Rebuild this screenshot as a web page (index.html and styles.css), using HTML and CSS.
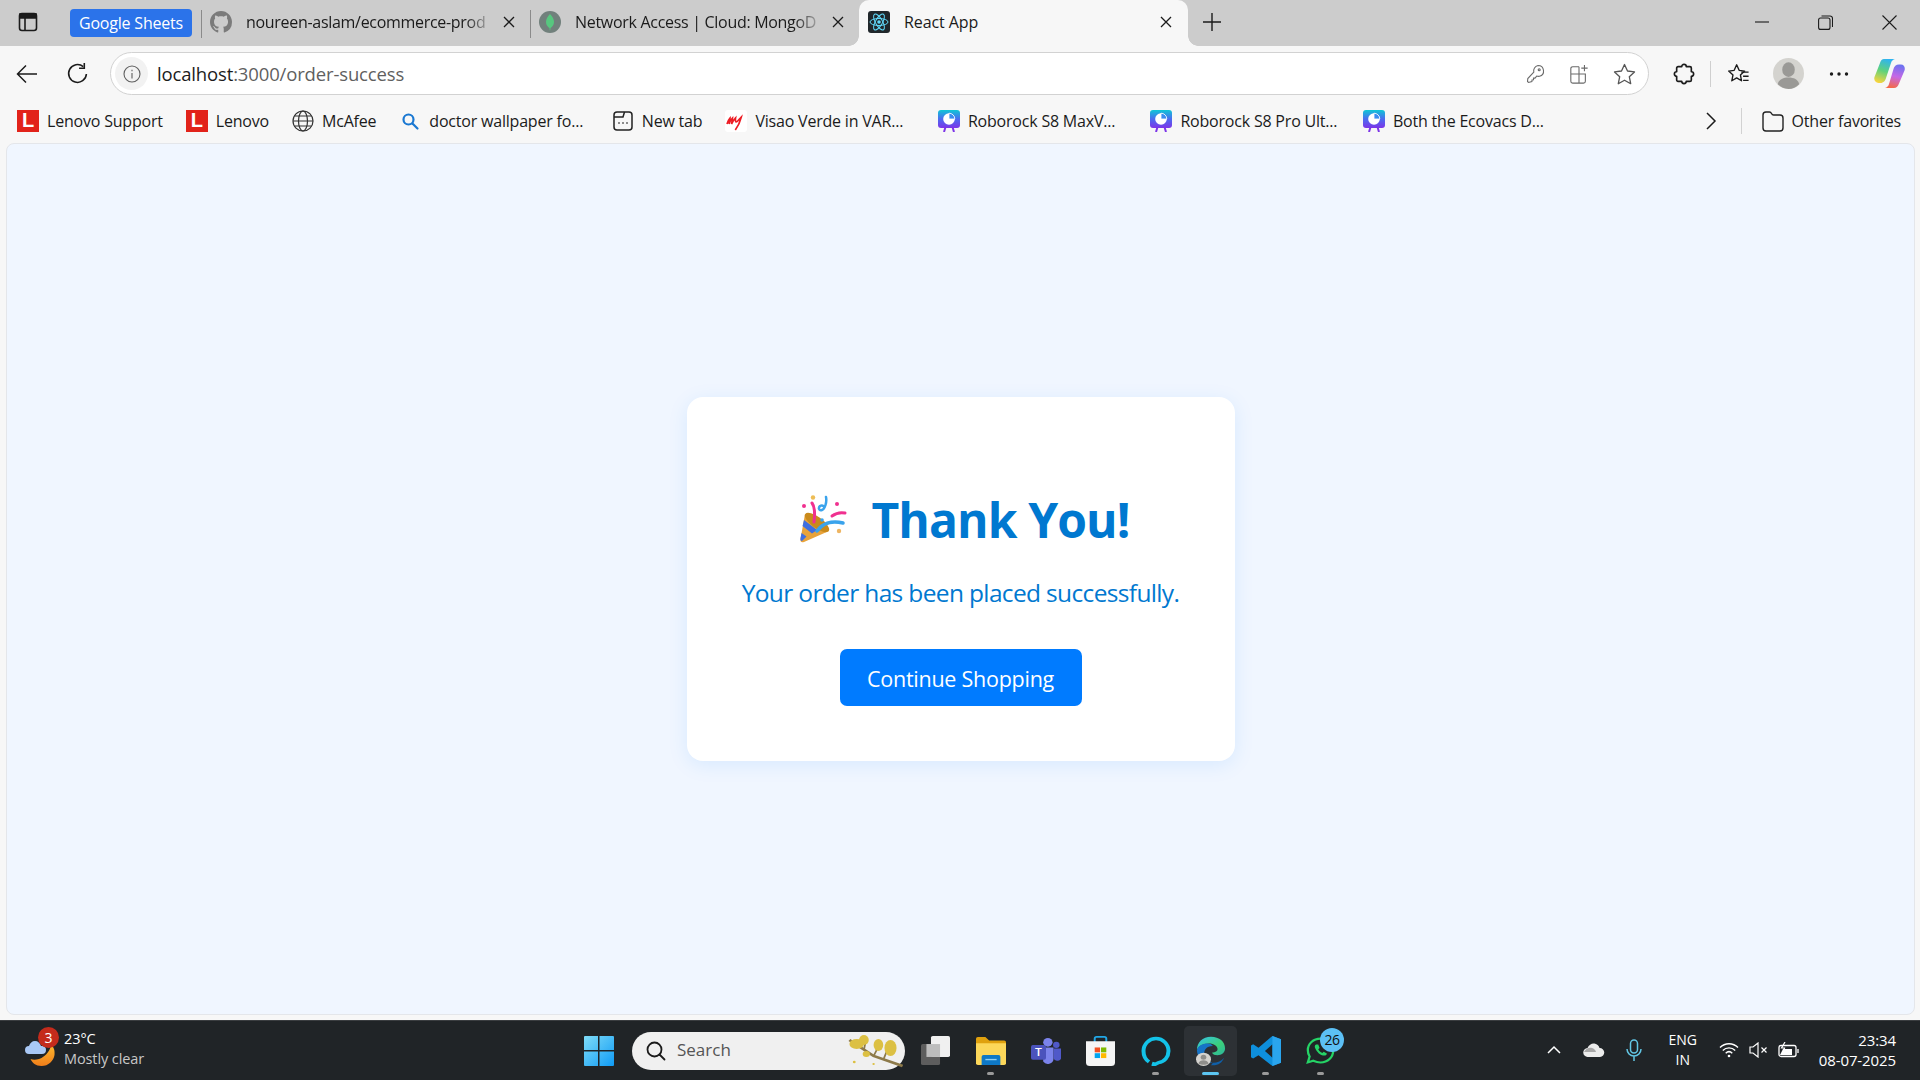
FILE: index.html
```html
<!DOCTYPE html>
<html lang="en">

<head>
    <meta charset="UTF-8">
    <meta name="viewport" content="width=device-width, initial-scale=1.0">
    <title>React App</title>
    <link rel="stylesheet" href="styles.css">
</head>

<body>

    <div class="tabstrip">
        <div class="sidebar-btn">
            <svg width="20" height="20" viewBox="0 0 20 20" fill="none" stroke="#1b1b1b" stroke-width="1.6"><rect x="1.5" y="1.5" width="17" height="17" rx="2.5"/><path d="M7 6v12"/><path d="M2 2h16v4H2z" fill="#1b1b1b"/></svg>
        </div>
        <div class="group-pill">Google Sheets</div>

        <div class="tab tab-sep">
            <svg class="tab-icon" width="22" height="22" viewBox="0 0 16 16"><path fill="#7b7b7b" d="M8 0C3.58 0 0 3.58 0 8c0 3.54 2.29 6.53 5.47 7.59.4.07.55-.17.55-.38 0-.19-.01-.82-.01-1.49-2.01.37-2.53-.49-2.69-.94-.09-.23-.48-.94-.82-1.13-.28-.15-.68-.52-.01-.53.63-.01 1.08.58 1.23.82.72 1.21 1.87.87 2.33.66.07-.52.28-.87.51-1.07-1.78-.2-3.64-.89-3.64-3.95 0-.87.31-1.59.82-2.15-.08-.2-.36-1.02.08-2.12 0 0 .67-.21 2.2.82.64-.18 1.32-.27 2-.27s1.36.09 2 .27c1.53-1.04 2.2-.82 2.2-.82.44 1.1.16 1.92.08 2.12.51.56.82 1.27.82 2.15 0 3.07-1.87 3.75-3.65 3.95.29.25.54.73.54 1.48 0 1.07-.01 1.93-.01 2.2 0 .21.15.46.55.38A8.01 8.01 0 0 0 16 8c0-4.42-3.58-8-8-8z"/></svg>
            <span class="tab-title">noureen-aslam/ecommerce-prod</span>
            <svg class="tab-close" width="12" height="12" viewBox="0 0 12 12" stroke="#1b1b1b" stroke-width="1.3"><path d="M1 1l10 10M11 1L1 11"/></svg>
        </div>

        <div class="tab tab-sep tab-before-active">
            <svg class="tab-icon" width="22" height="22" viewBox="0 0 22 22"><circle cx="11" cy="11" r="11" fill="#71807c"/><path fill="#57c77f" d="M11 3c2.600 2.800 4 5.400 4 8 0 2.800-1.600 4.700-3.500 6l-.2 2.300h-.6l-.2-2.300C8.600 15.700 7 13.800 7 11c0-2.600 1.400-5.200 4-8z"/></svg>
            <span class="tab-title">Network Access | Cloud: MongoD</span>
            <svg class="tab-close" width="12" height="12" viewBox="0 0 12 12" stroke="#1b1b1b" stroke-width="1.3"><path d="M1 1l10 10M11 1L1 11"/></svg>
        </div>

        <div class="tab tab-active">
            <svg class="tab-icon" width="22" height="22" viewBox="0 0 22 22"><rect width="22" height="22" rx="3" fill="#20272b"/><g fill="none" stroke="#61dafb" stroke-width="1"><ellipse cx="11" cy="11" rx="9" ry="3.500"/><ellipse cx="11" cy="11" rx="9" ry="3.500" transform="rotate(60 11 11)"/><ellipse cx="11" cy="11" rx="9" ry="3.500" transform="rotate(120 11 11)"/></g><circle cx="11" cy="11" r="1.800" fill="#61dafb"/></svg>
            <span class="tab-title">React App</span>
            <svg class="tab-close" width="12" height="12" viewBox="0 0 12 12" stroke="#1b1b1b" stroke-width="1.3"><path d="M1 1l10 10M11 1L1 11"/></svg>
        </div>

        <div class="new-tab">
            <svg width="20" height="20" viewBox="0 0 20 20" stroke="#1b1b1b" stroke-width="1.4"><path d="M10 1v18M1 10h18"/></svg>
        </div>

        <div class="window-controls">
            <svg width="14" height="14" viewBox="0 0 14 14" stroke="#1b1b1b" stroke-width="1.1"><path d="M0 7h14"/></svg>
            <svg width="15" height="15" viewBox="0 0 15 15" fill="none" stroke="#1b1b1b" stroke-width="1.100"><rect x=".6" y="3" width="11.400" height="11.400" rx="2"/><path d="M3.500 1h8.500a2.500 2.500 0 0 1 2.500 2.500v8.500"/></svg>
            <svg width="15" height="15" viewBox="0 0 15 15" stroke="#1b1b1b" stroke-width="1.100"><path d="M.5.5l14 14M14.500.5l-14 14"/></svg>
        </div>
    </div>

    <div class="toolbar">
        <div class="nav-btn">
            <svg width="22" height="20" viewBox="0 0 22 20" fill="none" stroke="#1b1b1b" stroke-width="1.500"><path d="M21 10H2M10 1.500L1.500 10l8.500 8.500"/></svg>
        </div>
        <div class="nav-btn nav-reload">
            <svg width="23" height="23" viewBox="0 0 22 22" fill="none" stroke="#1b1b1b" stroke-width="1.500"><path d="M19.500 11.500a8.500 8.500 0 1 1-3-7"/><path d="M17.500 1v5h-5"/></svg>
        </div>
        <div class="address-bar">
            <span class="info-chip">
                <svg width="18" height="18" viewBox="0 0 18 18" fill="none" stroke="#5f5f5f" stroke-width="1.100"><circle cx="9" cy="9" r="8"/><path d="M9 8v5.500M9 4.800v1.400"/></svg>
            </span>
            <span class="url"><span class="url-host">localhost</span>:3000/order-success</span>
            <div class="address-actions">
                <svg width="20" height="20" viewBox="0 0 20 20" fill="none" stroke="#6a6a6a" stroke-width="1.100"><path d="M13 1.500a5.500 5.500 0 0 1 1.500 10.800c-1 .2-2 .1-2.800-.2l-1.700 2h-1.500v1.700l-1.500.1-.1 1.600-3.400 1-1-1 .3-3 6-6.300A5.500 5.500 0 0 1 13 1.500z"/><circle cx="14.200" cy="5.800" r="1"/></svg>
                <svg width="20" height="20" viewBox="0 0 20 22" fill="none" stroke="#6a6a6a" stroke-width="1.200"><path d="M10 3H3a2 2 0 0 0-2 2v14a2 2 0 0 0 2 2h12a2 2 0 0 0 2-2V11H1M10 3v18"/><path d="M16 1v7M12.500 4.500h7"/></svg>
                <svg width="23" height="22" viewBox="0 0 23 22" fill="none" stroke="#555" stroke-width="1.300"><path d="M11.500 1.500l3 6.500 7 .9-5.200 4.800 1.400 7-6.200-3.500-6.200 3.500 1.400-7L1.500 8.900l7-.9z" stroke-linejoin="round"/></svg>
            </div>
        </div>
        <div class="toolbar-icons">
            <svg class="ext-icon" width="22" height="22" viewBox="0 0 24 24" fill="none" stroke="#1b1b1b" stroke-width="1.800"><path d="M9.500 4a2.500 2.500 0 0 1 5 0h4a1.500 1.500 0 0 1 1.500 1.500v4a2.500 2.500 0 0 1 0 5v4a1.500 1.500 0 0 1-1.500 1.500h-4a2.500 2.500 0 0 1-5 0h-4A1.500 1.500 0 0 1 4 18.500v-4a2.500 2.500 0 0 1 0-5v-4A1.500 1.500 0 0 1 5.500 4z" stroke-linejoin="round"/></svg>
            <span class="toolbar-sep"></span>
            <svg class="fav-icon" width="23" height="22" viewBox="0 0 24 24" fill="none" stroke="#1b1b1b" stroke-width="1.500"><path d="M10 2l2.700 6 6 .8-4.600 4.200 1.200 6.400L10 16.200 4.700 19.400 6 13 1.300 8.800l6-.8z" stroke-linejoin="round"/><path d="M15 10h8M17 14.500h6M17 19h6"/></svg>
            <svg class="avatar" width="31" height="31" viewBox="0 0 32 32"><circle cx="16" cy="16" r="16" fill="#d4d3cf"/><ellipse cx="16" cy="12" rx="6.500" ry="7.500" fill="#9a9996"/><path d="M5 27c1-5 5.500-7 11-7s10 2 11 7c-3 3-7 5-11 5s-8-2-11-5z" fill="#9a9996"/></svg>
            <svg class="dots-icon" width="20" height="4" viewBox="0 0 20 4" fill="#1b1b1b"><circle cx="2.500" cy="2" r="1.700"/><circle cx="10" cy="2" r="1.700"/><circle cx="17.500" cy="2" r="1.700"/></svg>
            <svg class="copilot" width="31" height="29" viewBox="0 0 31 29">
                <defs>
                    <linearGradient id="copA" x1="0.600" y1="0" x2="0.300" y2="1"><stop offset="0" stop-color="#2fb4f0"/><stop offset=".5" stop-color="#5fd27c"/><stop offset="1" stop-color="#f7d43e"/></linearGradient>
                    <linearGradient id="copB" x1="0.600" y1="0" x2="0.400" y2="1"><stop offset="0" stop-color="#6d72f0"/><stop offset=".5" stop-color="#c568e6"/><stop offset="1" stop-color="#f4694a"/></linearGradient>
                </defs>
                <path fill="url(#copB)" d="M20 29h-9c2-.5 3.500-2 4-4l4.500-15c.6-2.500 2.500-4.500 5.500-4.500h2c3 0 4.500 3 3.500 6L25 24.500c-.8 2.500-2.500 4.500-5 4.500z"/>
                <path fill="url(#copA)" d="M10 0h11c-2 .5-3.500 2-4 4l-5 15c-.6 2.500-2.500 5-5.500 5H4.500C1.500 24-.5 21 .5 18L6 4c.8-2.500 2-4 4-4z"/>
            </svg>
        </div>
    </div>

    <div class="bookmarks">
        <div class="bookmark"><span class="lenovo-icon">L</span><span>Lenovo Support</span></div>
        <div class="bookmark"><span class="lenovo-icon">L</span><span>Lenovo</span></div>
        <div class="bookmark">
            <svg width="22" height="22" viewBox="0 0 22 22" fill="none" stroke="#333" stroke-width="1.200"><circle cx="11" cy="11" r="10"/><ellipse cx="11" cy="11" rx="4.500" ry="10"/><path d="M1 11h20M2.500 6h17M2.500 16h17"/></svg>
            <span>McAfee</span>
        </div>
        <div class="bookmark bookmark-long">
            <svg width="22" height="22" viewBox="0 0 22 22" fill="none" stroke="#1a78d2" stroke-width="2.200"><circle cx="9.500" cy="9.500" r="5"/><path d="M13.500 13.500l5 5" stroke-linecap="round"/></svg>
            <span>doctor wallpaper fo...</span>
        </div>
        <div class="bookmark">
            <svg width="22" height="22" viewBox="0 0 22 22" fill="none" stroke="#222" stroke-width="1.500"><rect x="2" y="2" width="18" height="18" rx="3"/><path d="M2 7h9l1.500-5"/><path d="M6.500 13h1M10.500 13h1M14.500 13h1" stroke-width="2"/></svg>
            <span>New tab</span>
        </div>
        <div class="bookmark bookmark-long">
            <svg width="22" height="22" viewBox="0 0 22 22" fill="none"><rect width="22" height="22" rx="3" fill="#fff"/><path d="M2 14c1-3 2-5 3-6 0 2-.5 4-1 6 1-3 2.500-5 3.500-6 0 2-.5 4-1 6 1-2 3-5 4-6-.3 2 0 4 .8 4 1.200 0 3-3 5-5-1 4-3 9-6 13" stroke="#ed1c24" stroke-width="1.700"/></svg>
            <span>Visao Verde in VAR...</span>
        </div>
        <div class="bookmark bookmark-long">
            <svg width="22" height="22" viewBox="0 0 22 22"><use href="#rr"/></svg>
            <span>Roborock S8 MaxV...</span>
        </div>
        <div class="bookmark bookmark-long">
            <svg width="22" height="22" viewBox="0 0 22 22"><use href="#rr"/></svg>
            <span>Roborock S8 Pro Ult...</span>
        </div>
        <div class="bookmark bookmark-long">
            <svg width="22" height="22" viewBox="0 0 22 22"><use href="#rr"/></svg>
            <span>Both the Ecovacs D...</span>
        </div>
        <div class="bookmarks-end">
            <svg class="chevron" width="12" height="18" viewBox="0 0 12 18" fill="none" stroke="#1b1b1b" stroke-width="1.500"><path d="M2 1l8 8-8 8"/></svg>
            <span class="bookmarks-sep"></span>
            <div class="bookmark">
                <svg width="22" height="22" viewBox="0 0 22 22" fill="none" stroke="#222" stroke-width="1.400"><path d="M1 5a3 3 0 0 1 3-3h3.500c1 0 1.500.5 2 1.500.5 1 1 1.500 2 1.500H18a3 3 0 0 1 3 3v10a3 3 0 0 1-3 3H4a3 3 0 0 1-3-3z"/></svg>
                <span>Other favorites</span>
            </div>
        </div>
    </div>

    <svg class="defs-holder" width="0" height="0">
        <defs>
            <linearGradient id="rrGrad" x1="0" y1="0" x2="0" y2="1"><stop offset="0" stop-color="#0fc7d6"/><stop offset=".5" stop-color="#4b6cf0"/><stop offset="1" stop-color="#7d35e8"/></linearGradient>
            <g id="rr">
                <rect width="22" height="18" rx="3" fill="url(#rrGrad)"/>
                <circle cx="11" cy="9" r="5.800" fill="#fff"/>
                <path d="M11 9V3.200A5.800 5.800 0 0 1 16.800 9z" fill="#3b8df0" stroke="#fff" stroke-width=".8"/>
                <path d="M7.500 17l-1.500 5M14.500 17l1.500 5" stroke="#7d35e8" stroke-width="2"/>
            </g>
        </defs>
    </svg>

    <main class="page">
        <div class="success-card">
            <h1>
                <svg class="party-icon" width="50" height="50" viewBox="0 0 50 50">
                    <path d="M6 19l24 17L5 47c-3 1-4-1-3.500-3z" fill="#e8a33a"/>
                    <path d="M5 25l13 10-5 3.500L3.500 31zM2.500 38l5 3.500L3 46c-1 0-2-1-1.500-3z" fill="#3f6fe0"/>
                    <ellipse cx="18" cy="27.500" rx="14.500" ry="5.500" transform="rotate(36 18 27.500)" fill="#c98a1c"/>
                    <path d="M13 8c3 4 3 11 2 19" fill="none" stroke="#f0308f" stroke-width="3" stroke-linecap="round"/>
                    <path d="M27 2c1 5-1 12-4 13-3 1-4-2-2-4 2-1 4 0 4 1" fill="none" stroke="#3aa3ec" stroke-width="2.500" stroke-linecap="round"/>
                    <path d="M33 21c4-3 8-4 13-3" fill="none" stroke="#f0308f" stroke-width="3" stroke-linecap="round"/>
                    <path d="M18 36c5-7 14-11 26-8" fill="none" stroke="#3aa3ec" stroke-width="3.500" stroke-linecap="round"/>
                    <circle cx="14" cy="2.500" r="2.200" fill="#eebd55"/>
                    <circle cx="5" cy="11" r="2" fill="#f0308f"/>
                    <circle cx="38" cy="9" r="2" fill="#f0308f"/>
                    <circle cx="40" cy="36" r="2.200" fill="#eeb562"/>
                    <circle cx="23" cy="25" r="1.800" fill="#3aa3ec"/>
                </svg>
                <span>Thank You!</span>
            </h1>
            <p>Your order has been placed successfully.</p>
            <a class="continue-btn" href="#">Continue Shopping</a>
        </div>
    </main>

    <div class="taskbar">
        <div class="weather">
            <svg class="weather-icon" width="34" height="40" viewBox="0 0 34 40">
                <defs><linearGradient id="moon" x1="0" y1="0" x2="0" y2="1"><stop offset="0" stop-color="#fdb92e"/><stop offset="1" stop-color="#ef7d1a"/></linearGradient></defs>
                <path d="M27 14c3 2 4 6 3.500 10-1 6-6 11-13 11-6 0-9-3-11-7 3 1 7 1 11-1 5-3 9-8 9.500-13z" fill="url(#moon)"/>
                <path d="M5 23a4 4 0 0 1 0-8c1-3 3-5 6-5s5 2 6 5h1a4 4 0 0 1 0 8z" fill="#a9c8f5"/>
            </svg>
            <span class="weather-badge">3</span>
            <div class="weather-text">
                <div class="weather-temp">23°C</div>
                <div class="weather-desc">Mostly clear</div>
            </div>
        </div>

        <div class="task-center">
            <svg class="start-icon" width="30" height="30" viewBox="0 0 30 30">
                <defs><linearGradient id="win" x1="0" y1="0" x2="1" y2="1"><stop offset="0" stop-color="#7fdcf8"/><stop offset="1" stop-color="#0f9bf5"/></linearGradient></defs>
                <path fill="url(#win)" d="M1 0h13v14H0V1a1 1 0 0 1 1-1zM15.500 0H29a1 1 0 0 1 1 1v13H15.500zM0 15.500h14V30H1a1 1 0 0 1-1-1zM15.500 15.500H30V29a1 1 0 0 1-1 1H15.500z"/>
            </svg>
            <div class="search-box">
                <svg width="20" height="20" viewBox="0 0 20 20" fill="none" stroke="#1b1b1b" stroke-width="1.800"><circle cx="8.500" cy="8.500" r="7"/><path d="M13.500 13.500l5 5" stroke-linecap="round"/></svg>
                <span class="search-label">Search</span>
                <svg class="search-art" width="58" height="34" viewBox="0 0 48 34" preserveAspectRatio="none">
                    <path d="M2 6l20 16 24 10" fill="none" stroke="#8d7a4a" stroke-width="2.500"/>
                    <path d="M22 22l6-14M14 16l2-12M30 26l6-18" fill="none" stroke="#8d7a4a" stroke-width="1.500"/>
                    <g fill="#dcc043"><ellipse cx="8" cy="10" rx="6" ry="5"/><ellipse cx="14" cy="6" rx="4" ry="5"/><ellipse cx="26" cy="11" rx="4" ry="6"/><ellipse cx="36" cy="14" rx="5" ry="8"/><ellipse cx="16" cy="20" rx="3" ry="3"/><circle cx="6" cy="28" r="1.200"/><circle cx="22" cy="30" r="1"/></g>
                </svg>
            </div>

            <div class="task-item">
                <svg width="29" height="29" viewBox="0 0 32 36" preserveAspectRatio="none"><rect x="0" y="10" width="21" height="26" rx="2" fill="#5d5d5d"/><rect x="11" y="0" width="21" height="26" rx="2" fill="#f0f0f0"/><rect x="6" y="10" width="15" height="16" fill="#bdbdbd"/></svg>
            </div>
            <div class="task-item">
                <svg width="30" height="29" viewBox="0 0 32 32" preserveAspectRatio="none"><path d="M0 3a2 2 0 0 1 2-2h8l4 4h16a2 2 0 0 1 2 2v6H0z" fill="#e0a10e"/><path d="M0 8h32v22a2 2 0 0 1-2 2H2a2 2 0 0 1-2-2z" fill="#fcd75a"/><path d="M6 23a2 2 0 0 1 2-2h16a2 2 0 0 1 2 2v9H6z" fill="#0e78c6"/><path d="M10 26h12" stroke="#8fd0f5" stroke-width="1.500"/></svg>
                <span class="task-dot"></span>
            </div>
            <div class="task-item">
                <svg width="30" height="28" viewBox="0 0 32 32" preserveAspectRatio="none"><circle cx="18" cy="6" r="5" fill="#7b83eb"/><circle cx="27" cy="9" r="3.500" fill="#5059c9"/><path d="M13 12h11v13a6 6 0 0 1-11 3z" fill="#7b83eb"/><path d="M24 13h8v9a4 4 0 0 1-8 2z" fill="#5059c9"/><rect x="0" y="9" width="16" height="17" rx="2" fill="#4b53bc"/><text x="8" y="22" class="teams-t">T</text></svg>
            </div>
            <div class="task-item">
                <svg width="29" height="30" viewBox="0 0 30 34" preserveAspectRatio="none"><path d="M9 7V3a2 2 0 0 1 2-2h8a2 2 0 0 1 2 2v4" fill="none" stroke="#21a7e6" stroke-width="2"/><path d="M0 6h30v24a4 4 0 0 1-4 4H4a4 4 0 0 1-4-4z" fill="#f5f5f5"/><rect x="9" y="13" width="5.500" height="5.500" fill="#f25022"/><rect x="15.500" y="13" width="5.500" height="5.500" fill="#7fba00"/><rect x="9" y="19.500" width="5.500" height="5.500" fill="#00a4ef"/><rect x="15.500" y="19.500" width="5.500" height="5.500" fill="#ffb900"/></svg>
            </div>
            <div class="task-item">
                <svg width="30" height="30" viewBox="0 0 30 36" preserveAspectRatio="none" fill="none"><path d="M8 31C4 28 2.500 23 2.500 18 2.500 10 8 3 15 3s12.500 7 12.500 15c0 7-4 13-10 14l-5 3 1-3.500" stroke="#13c2e8" stroke-width="4" stroke-linejoin="round"/></svg>
                <span class="task-dot"></span>
            </div>
            <div class="task-item task-active">
                <svg width="30" height="30" viewBox="0 0 32 36" preserveAspectRatio="none">
                    <defs><linearGradient id="edgeG" x1="0" y1="0" x2="1" y2="1"><stop offset="0" stop-color="#36c1e8"/><stop offset=".6" stop-color="#3bd07a"/><stop offset="1" stop-color="#2db5a0"/></linearGradient></defs>
                    <path d="M16 1c9 0 15 6 15 14 0 5-4 8-8 8-3 0-5-1-6-3 4 0 6-2 6-4 0-4-4-7-9-7C7 9 2 13 1 17 1 8 7 1 16 1z" fill="url(#edgeG)"/>
                    <path d="M1 17c1-5 6-8 11-8 3 0 5 1 6 3-7 0-10 5-9 11 1 4 4 8 9 9-9 1-17-6-17-15z" fill="#1673c7"/>
                    <path d="M18 32c5 0 9-2 12-6-2 6-7 10-14 9z" fill="#0f5fa8"/>
                    <circle cx="8" cy="28" r="8" fill="#d5d3cf"/><circle cx="8" cy="25.500" r="3" fill="#8f8e8b"/><path d="M2.500 33c1-3 3-4 5.500-4s4.500 1 5.500 4c-3 2-8 2-11 0z" fill="#8f8e8b"/>
                </svg>
                <span class="task-dot active-dot"></span>
            </div>
            <div class="task-item">
                <svg width="30" height="30" viewBox="0 0 28 36" preserveAspectRatio="none"><path d="M20 0l8 4v28l-8 4-13-13-5 4-2-1.500V11.500L2 10l5 4zM20 10l-7 8 7 8z" fill="#0e8fdc" fill-rule="evenodd"/><path d="M20 0l8 4v28l-8 4z" fill="#2aa5ee"/></svg>
                <span class="task-dot"></span>
            </div>
            <div class="task-item">
                <svg width="29" height="29" viewBox="0 0 32 34" preserveAspectRatio="none" fill="none"><path d="M4 24C2.500 21.500 2 19 2 16.500 2 9 8 3 16 3s14 6 14 14-6 14-14 14c-3 0-5.500-.8-8-2l-6 2z" stroke="#25d366" stroke-width="2.500"/><path d="M11 10c-1.500 1-2 3 0 6 2 4 6 7 9 7 2 0 3-1 3-2.500l-3.500-2-1.500 1.500c-2-1-3.500-2.500-4.500-4.500l1.500-1.500-1.500-4z" fill="#25d366"/></svg>
                <span class="task-badge">26</span>
                <span class="task-dot"></span>
            </div>
        </div>

        <div class="tray">
            <span class="tray-slot"><svg width="14" height="9" viewBox="0 0 14 9" fill="none" stroke="#fff" stroke-width="1.500"><path d="M1 8l6-6 6 6"/></svg></span>
            <span class="tray-slot"><svg width="22" height="14" viewBox="0 0 22 14"><path d="M5 14a4.500 4.500 0 0 1-.5-9C6 1.500 9 0 11.500 .5c3 .5 4.500 2.500 5 4.500a4.500 4.500 0 0 1 .5 9z" fill="#ececec"/><path d="M1 9C3 5 6.500 4 9 5c2 .5 3.500 2 4 4z" fill="#a8a8a8"/></svg></span>
            <span class="tray-slot"><svg width="16" height="22" viewBox="0 0 16 22" fill="none" stroke="#62c6e4" stroke-width="1.500"><rect x="4.500" y="1" width="7" height="13" rx="3.500"/><path d="M1 10a7 7 0 0 0 14 0M8 17v5"/></svg></span>
            <div class="lang"><div>ENG</div><div>IN</div></div>
            <span class="tray-icon"><svg width="20" height="16" viewBox="0 0 20 16" fill="none" stroke="#fff" stroke-width="1.400"><path d="M1 5.500c5-5 13-5 18 0M3.800 8.500c3.500-3.500 8.900-3.500 12.400 0M6.700 11.200c2-2 4.600-2 6.600 0"/><circle cx="10" cy="14" r="1.300" fill="#fff" stroke="none"/></svg></span>
            <span class="tray-icon"><svg width="20" height="16" viewBox="0 0 20 16" fill="none" stroke="#fff" stroke-width="1.200"><path d="M1 5v6h3l5 4V1L4 5z"/><path d="M12.500 5.500l5 5M17.500 5.500l-5 5"/></svg></span>
            <span class="tray-icon"><svg width="21" height="16" viewBox="0 0 21 16" fill="none" stroke="#fff" stroke-width="1.300"><rect x="1" y="3.500" width="17" height="11" rx="2"/><path d="M20 7v4"/><path d="M2 13L5 7l9-.1V13z" fill="#fff" stroke="none"/><path d="M7 0L3.500 6h3L5 11" stroke-width="1.200"/></svg></span>
            <div class="clock"><div>23:34</div><div>08-07-2025</div></div>
        </div>
    </div>

</body>

</html>
```

FILE: styles.css
```css
* {
    box-sizing: border-box;
}

html,
body {
    height: 100%;
}

body {
    margin: 0;
    display: flex;
    flex-direction: column;
    background-color: #f7f7f7;
    font-family: "Open Sans", sans-serif;
    color: #1b1b1b;
    overflow: hidden;
}

svg {
    flex-shrink: 0;
    display: block;
}

.defs-holder {
    position: absolute;
}

/* tabs */

.tabstrip {
    height: 46px;
    display: flex;
    align-items: center;
    background-color: #cccccc;
}

.sidebar-btn {
    width: 70px;
    height: 100%;
    padding-left: 18px;
    padding-bottom: 2px;
    display: flex;
    align-items: center;
}

.group-pill {
    width: 122px;
    height: 28px;
    margin-right: 9px;
    display: flex;
    align-items: center;
    justify-content: center;
    background-color: #2b73ea;
    border-radius: 4px;
    color: #fff;
    font-size: 16px;
    letter-spacing: -0.2px;
}

.tab {
    width: 329px;
    height: 46px;
    padding: 0 15px 2px 8px;
    display: flex;
    align-items: center;
    font-size: 16px;
    letter-spacing: -0.3px;
    position: relative;
}

.tab-sep {
    padding-left: 9px;
}

.tab-sep::before {
    content: "";
    position: absolute;
    left: 0;
    top: 10px;
    width: 1px;
    height: 28px;
    background-color: #8a8a8a;
}

.tab-icon {
    margin-right: 14px;
}

.tab-title {
    flex: 1;
    min-width: 0;
    white-space: nowrap;
    -webkit-mask-image: linear-gradient(to right, #000 88%, transparent 100%);
    mask-image: linear-gradient(to right, #000 88%, transparent 100%);
}

.tab-close {
    margin-left: 8px;
}

.tab-active {
    background-color: #f7f7f7;
    border-radius: 10px 10px 0 0;
    padding-left: 9px;
    padding-right: 16px;
    letter-spacing: -0.1px;
}

.tab-active .tab-title {
    -webkit-mask-image: none;
    mask-image: none;
}

.tab-active::before,
.tab-active::after {
    content: "";
    position: absolute;
    bottom: 0;
    width: 10px;
    height: 10px;
}

.tab-active::before {
    left: -10px;
    background: radial-gradient(circle at 0 0, transparent 9.5px, #f7f7f7 10px);
}

.tab-active::after {
    right: -10px;
    background: radial-gradient(circle at 100% 0, transparent 9.500px, #f7f7f7 10px);
}

.new-tab {
    width: 48px;
    padding-left: 14px;
    margin-bottom: 2px;
}

.window-controls {
    margin-left: auto;
    margin-bottom: 2px;
    padding-right: 23px;
    display: flex;
    align-items: center;
    gap: 49px;
}

/* address bar row */

.toolbar {
    height: 49px;
    padding-top: 6px;
    display: flex;
    align-items: flex-start;
}

.nav-btn {
    width: 50px;
    height: 43px;
    display: flex;
    align-items: center;
    justify-content: center;
    margin-left: 2px;
    margin-right: -3px;
}

.nav-reload {
    margin-left: 3px;
    margin-right: -4px;
}

.address-bar {
    width: 1539px;
    height: 43px;
    margin-left: 12px;
    padding: 0 12px 0 4px;
    display: flex;
    align-items: center;
    background-color: #fff;
    border: 1px solid #d2d2d2;
    border-radius: 22px;
}

.info-chip {
    width: 33px;
    height: 33px;
    margin-right: 9px;
    display: flex;
    align-items: center;
    justify-content: center;
    background-color: #f2f2f2;
    border-radius: 50%;
}

.url {
    font-size: 18.5px;
    letter-spacing: -0.15px;
    color: #5f5f5f;
}

.url-host {
    color: #1b1b1b;
}

.address-actions {
    margin-left: auto;
    display: flex;
    align-items: center;
    gap: 24px;
}

.toolbar-icons {
    height: 43px;
    padding-left: 24px;
    display: flex;
    align-items: center;
}

.toolbar-sep {
    width: 1px;
    height: 26px;
    margin: 0 16px 0 15px;
    background-color: #cfcfcf;
}

.avatar {
    margin-left: 23px;
}

.dots-icon {
    margin-left: 25px;
}

.copilot {
    margin-left: 25px;
}

/* favorites bar */

.bookmarks {
    height: 48px;
    padding: 3px 19px 0 17px;
    display: flex;
    align-items: center;
    gap: 23px;
    font-size: 16px;
    letter-spacing: -0.2px;
    white-space: nowrap;
}

.bookmark {
    display: flex;
    align-items: center;
    gap: 8px;
}

.bookmark-long {
    width: 189.5px;
}

.lenovo-icon {
    width: 22px;
    height: 22px;
    display: flex;
    align-items: center;
    justify-content: center;
    background-color: #e2231a;
    color: #fff;
    font-family: "Liberation Sans", sans-serif;
    font-size: 20px;
    font-weight: 700;
    letter-spacing: 0;
}

.bookmarks-end {
    margin-left: auto;
    display: flex;
    align-items: center;
}

.chevron {
    margin-right: 24px;
}

.bookmarks-sep {
    width: 1px;
    height: 26px;
    margin-right: 20px;
    background-color: #d2d2d2;
}

/* page */

.page {
    flex: 1;
    min-height: 0;
    margin: 0 5px 5px 6px;
    display: flex;
    align-items: center;
    justify-content: center;
    background-color: #f0f6ff;
    border: 1px solid #e4e6ea;
    border-radius: 8px;
}

.success-card {
    width: 548px;
    height: 364px;
    padding: 90px 40px 0;
    display: flex;
    flex-direction: column;
    align-items: center;
    background-color: #fff;
    border-radius: 16px;
    box-shadow: 0 4px 20px rgba(0, 123, 255, 0.1);
}

.success-card h1 {
    margin: 0 0 23px;
    padding-left: 8px;
    height: 66px;
    display: flex;
    align-items: center;
    gap: 22px;
    color: #0078d0;
    font-size: 48px;
    font-weight: 700;
    letter-spacing: -0.9px;
    line-height: 1;
}

.success-card p {
    margin: 0 0 39px;
    height: 34px;
    color: #0078d0;
    font-size: 24.5px;
    line-height: 34px;
    letter-spacing: -0.65px;
    white-space: nowrap;
}

.continue-btn {
    width: 242px;
    height: 57px;
    padding-top: 2px;
    display: flex;
    align-items: center;
    justify-content: center;
    background-color: #007bff;
    border-radius: 7px;
    color: #fff;
    font-size: 21.5px;
    letter-spacing: -0.25px;
    text-decoration: none;
}

/* windows taskbar */

.taskbar {
    height: 60px;
    display: grid;
    grid-template-columns: 584px auto 1fr;
    align-items: center;
    background-color: #202427;
    border-top: 1px solid #3a3d40;
    color: #fff;
}

.weather {
    display: flex;
    align-items: center;
    padding-left: 24px;
    position: relative;
}

.weather-icon {
    margin-right: 6px;
}

.weather-badge {
    position: absolute;
    left: 38px;
    top: -2px;
    width: 21px;
    height: 21px;
    display: flex;
    align-items: center;
    justify-content: center;
    background-color: #c42b1c;
    border-radius: 50%;
    font-size: 14px;
}

.weather-text {
    padding-bottom: 3px;
    font-size: 14.5px;
    letter-spacing: -0.1px;
    line-height: 20px;
}

.weather-desc {
    color: #c8c8c8;
}

.task-center {
    display: flex;
    align-items: center;
}

.start-icon {
    margin-right: 18px;
}

.search-box {
    width: 273px;
    height: 38px;
    margin-right: 3px;
    padding: 0 0 0 14px;
    display: flex;
    align-items: center;
    background-color: #f0f0f0;
    border-radius: 19px;
    color: #555;
    font-size: 17px;
}

.search-label {
    margin-left: 11px;
    margin-bottom: 2px;
    letter-spacing: 0;
}

.search-art {
    margin-left: auto;
    margin-right: 0;
}

.task-item {
    width: 55px;
    height: 50px;
    display: flex;
    align-items: center;
    justify-content: center;
    position: relative;
}

.teams-t {
    fill: #fff;
    font-family: "Open Sans", sans-serif;
    font-size: 13px;
    font-weight: 600;
    text-anchor: middle;
}

.task-active {
    width: 53px;
    margin: 0 1px;
    background-color: #2d3135;
    border-radius: 5px;
}

.task-dot {
    position: absolute;
    bottom: 1px;
    left: 24px;
    width: 7px;
    height: 3px;
    background-color: #9a9a9a;
    border-radius: 2px;
}

.active-dot {
    left: 18px;
    width: 17px;
    background-color: #5cc6f2;
}

.task-badge {
    position: absolute;
    top: 2px;
    right: 4px;
    width: 24px;
    height: 24px;
    display: flex;
    align-items: center;
    justify-content: center;
    background-color: #5cc0f5;
    border-radius: 50%;
    color: #111;
    font-size: 14px;
    letter-spacing: -0.5px;
}

.tray {
    display: flex;
    align-items: center;
    justify-content: flex-end;
    padding-right: 24px;
    padding-bottom: 2px;
}

.tray-slot {
    width: 40px;
    display: flex;
    justify-content: center;
}

.lang {
    width: 58px;
    margin-right: 2px;
    text-align: center;
    font-size: 14px;
    line-height: 20px;
}

.tray-icon {
    width: 30px;
    display: flex;
    justify-content: center;
}

.clock {
    margin-left: 15px;
    text-align: right;
    font-size: 15px;
    line-height: 20px;
    letter-spacing: -0.1px;
}
```
